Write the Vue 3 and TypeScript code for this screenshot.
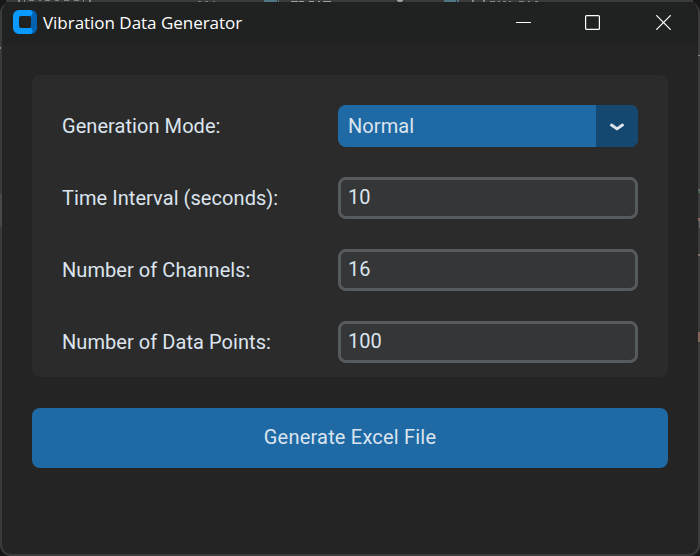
<script setup lang="ts">
import { ref } from 'vue'

interface Field {
  id: string
  label: string
  value: string
}

const mode = ref('Normal')
const fields = ref<Field[]>([
  { id: 'interval', label: 'Time Interval (seconds):', value: '10' },
  { id: 'channels', label: 'Number of Channels:', value: '16' },
  { id: 'points', label: 'Number of Data Points:', value: '100' },
])
</script>

<template>
  <div class="desktop">
    <!-- Editor window that lies behind the dialog -->
    <svg class="behind" width="700" height="556" viewBox="0 0 700 556" shape-rendering="crispEdges">
      <path fill="#3b3b3b" d="M0 0h700v2H0z" />
      <path fill="#181818" d="M0 0h6v10H0zM693 0h7v12h-7zM0 546h10v10H0zM690 546h10v10h-10z" />
      <path fill="#858585" d="M18 0h2v2h-2zM24 0h1v2h-1zM29 0h5v1h-5zM39 0h2v1h-2zM45 0h5v1h-5zM55 0h4v1h-4zM64 0h5v1h-5zM74 0h5v1h-5zM83 0h1v2h-1zM89 0h2v2h-2z" />
      <path fill="#777" d="M198 1h3v1h-3zM205 1h3v1h-3zM213 1h2v1h-2z" />
      <path fill="#507583" d="M264 0h13v2h-13zM278 0h1v2h-1zM444 0h12v2h-12zM457 0h2v2h-2z" />
      <path fill="#a0a0a0" d="M291 1h7v1h-7zM299 1h5v1h-5zM309 1h5v1h-5zM318 1h2v1h-2zM323 1h8v1h-8zM397 0h6v1h-6zM398 1h4v1h-4z" />
      <path fill="#888" d="M472 0h2v2h-2zM483 0h2v2h-2zM490 1h5v1h-5zM498 1h2v1h-2zM503 1h3v1h-3zM509 1h2v1h-2zM519 1h5v1h-5zM528 1h2v1h-2zM535 1h3v1h-3z" />
    </svg>

    <main class="window">
      <header class="titlebar">
        <svg class="logo" width="24" height="24" viewBox="0 0 24 24">
          <path fill="#0062b1" d="M14 0h4a6 6 0 0 1 6 6v12a6 6 0 0 1-6 6h-4z" />
          <path fill="#0a9aff" d="M6 0h10.500a3 3 0 0 1 0 6H12v12h4.500a3 3 0 0 1 0 6H6a6 6 0 0 1-6-6V6a6 6 0 0 1 6-6z" />
          <path fill="#202221" d="M8 6h8.500l1.500 1.500v9L16.500 18H8a2 2 0 0 1-2-2V8a2 2 0 0 1 2-2z" />
        </svg>
        <h1 class="title">Vibration Data Generator</h1>
        <div class="controls">
          <svg width="15" height="15" viewBox="0 0 15 15"><path d="M0 7.500h15" /></svg>
          <svg width="15" height="15" viewBox="0 0 15 15"><rect x=".6" y=".6" width="13.800" height="13.800" rx="1" /></svg>
          <svg width="15" height="15" viewBox="0 0 15 15"><path d="M.3.300l14.400 14.400M14.700.300L.3 14.700" /></svg>
        </div>
      </header>

      <section class="card">
        <div class="row">
          <span class="label">Generation Mode:</span>
          <button class="select" type="button">
            <span class="select-value">{{ mode }}</span>
            <span class="select-arrow">
              <svg width="16" height="10" viewBox="0 0 16 10"><path d="M2.500 3L8 6.900 13.500 3" /></svg>
            </span>
          </button>
        </div>
        <div v-for="field in fields" :key="field.id" class="row">
          <label class="label" :for="field.id">{{ field.label }}</label>
          <input :id="field.id" v-model="field.value" class="entry" type="text" />
        </div>
      </section>

      <button class="generate" type="button">Generate Excel File</button>
    </main>

    <!-- Editor marks showing through the translucent frame -->
    <svg class="behind marks" width="700" height="556" viewBox="0 0 700 556" shape-rendering="crispEdges">
      <path fill="#484848" d="M0 194h2v33H0z" />
      <path fill="#8a8580" d="M0 47h1v2H0zM698 55h2v1h-2z" />
      <path fill="#56705a" d="M698 189h2v2h-2zM699 191h1v2h-1z" />
      <path fill="#87675c" d="M698 218h2v3h-2zM698 332h2v10h-2z" />
      <path fill="#666" d="M699 221h1v7h-1z" />
      <path fill="#80706b" d="M698 254h2v2h-2z" />
    </svg>
  </div>
</template>

<style>
body {
  background: #181818;
}
</style>

<style scoped>
.desktop {
  display: grid;
  width: 700px;
  height: 556px;
  overflow: hidden;
  font-family: Roboto, 'Liberation Sans', sans-serif;
  font-size: 20px;
  letter-spacing: 0.06px;
  color: #dce4ee;
}
.behind,
.window {
  grid-area: 1 / 1;
}
.marks {
  pointer-events: none;
}
.window {
  box-sizing: border-box;
  display: flex;
  flex-direction: column;
  width: 700px;
  height: 554px;
  margin-top: 2px;
  border: 2px solid #3b3b3b;
  border-top-width: 0;
  border-radius: 11px;
  background: #242424;
  overflow: hidden;
}
.titlebar {
  box-sizing: border-box;
  display: flex;
  align-items: center;
  flex: none;
  height: 43px;
  padding: 0 27px 3px 11px;
  background: #202221;
}
.title {
  margin: 2px 0 0 6px;
  font: 400 17px/24px 'Open Sans', 'Noto Sans', sans-serif;
  letter-spacing: -0.03px;
  color: #fff;
  white-space: nowrap;
}
.controls {
  display: grid;
  grid-template-columns: 69px 71px 15px;
  margin-left: auto;
}
.controls svg {
  fill: none;
  stroke: #fff;
  stroke-width: 1.2;
}
.card {
  display: flex;
  flex-direction: column;
  gap: 30px;
  flex: none;
  box-sizing: border-box;
  height: 302px;
  margin: 30px 30px 0;
  padding: 30px 30px 0;
  border-radius: 8px;
  background: #2b2b2b;
}
.row {
  display: flex;
  align-items: center;
  justify-content: space-between;
  height: 42px;
}
.label {
  white-space: nowrap;
}
.select,
.entry,
.generate {
  box-sizing: border-box;
  margin: 0;
  font: inherit;
  letter-spacing: inherit;
  color: inherit;
  border-radius: 8px;
  outline: none;
}
.select {
  display: flex;
  width: 300px;
  height: 42px;
  padding: 0;
  border: 0;
  background: #1f6aa5;
  overflow: hidden;
}
.select-value {
  flex: 1;
  padding-left: 10px;
  line-height: 42px;
  text-align: left;
}
.select-arrow {
  display: flex;
  align-items: center;
  justify-content: center;
  width: 42px;
  height: 42px;
  padding-top: 1px;
  box-sizing: border-box;
  background: #144870;
}
.select-arrow path {
  fill: none;
  stroke: #dce4ee;
  stroke-width: 2.9;
  stroke-linecap: round;
  stroke-linejoin: round;
}
.entry {
  width: 300px;
  height: 42px;
  padding: 0 7px 2px;
  border: 3px solid #565b5e;
  background: #343638;
}
.generate {
  flex: none;
  height: 60px;
  margin: 31px 30px 0;
  padding: 0 0 2px;
  border: 0;
  letter-spacing: 0.2px;
  background: #1f6aa5;
}
</style>
